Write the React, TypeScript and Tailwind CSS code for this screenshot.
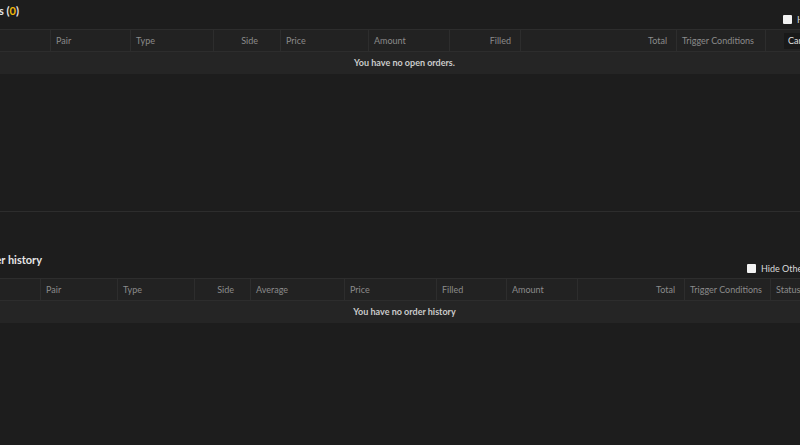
import React from 'react'

type Col = { label: string; w: number; right?: boolean; pr?: number }

const openCols: Col[] = [
  { label: 'Date', w: 50 },
  { label: 'Pair', w: 80 },
  { label: 'Type', w: 83 },
  { label: 'Side', w: 67, right: true, pr: 22 },
  { label: 'Price', w: 88 },
  { label: 'Amount', w: 81 },
  { label: 'Filled', w: 71, right: true, pr: 9 },
  { label: 'Total', w: 156, right: true, pr: 9 },
  { label: 'Trigger Conditions', w: 89 },
]

const historyCols: Col[] = [
  { label: 'Date', w: 40 },
  { label: 'Pair', w: 77 },
  { label: 'Type', w: 77 },
  { label: 'Side', w: 56, right: true, pr: 16 },
  { label: 'Average', w: 94 },
  { label: 'Price', w: 92 },
  { label: 'Filled', w: 70 },
  { label: 'Amount', w: 71 },
  { label: 'Total', w: 107, right: true, pr: 9 },
  { label: 'Trigger Conditions', w: 86 },
  { label: 'Status', w: 90 },
]

function HeaderRow({ cols, extra }: { cols: Col[]; extra?: React.ReactNode }) {
  return (
    <div className="flex h-[23px] border-y border-[#2d2d2d] bg-[#222222]">
      {cols.map((c, i) => (
        <div
          key={i}
          className={`flex items-center shrink-0 h-full text-[9px] text-[#8b8b8b] ${i > 0 ? 'border-l border-[#2d2d2d] pl-[5px]' : 'justify-end overflow-hidden'} ${c.right ? 'justify-end' : ''}`}
          style={{ width: c.w, paddingRight: c.pr }}
        >
          {i === 0 ? <span className="invisible">{c.label}</span> : c.label}
        </div>
      ))}
      {extra}
    </div>
  )
}

function Checkbox({ label }: { label: string }) {
  return (
    <label className="flex items-center gap-[5px] text-[9px] text-[#dadada] whitespace-nowrap">
      <span className="w-[9px] h-[9px] bg-[#f2f2f2] rounded-[1px] shrink-0" />
      {label}
    </label>
  )
}

function Title({ children, w }: { children: React.ReactNode; w: number }) {
  // the panel is scrolled sideways, so the title's start is off-screen
  return (
    <div className="flex justify-end shrink-0" style={{ width: w }}>
      <h2 className="shrink-0 text-[11px] font-bold text-[#e6e6e6] whitespace-nowrap">{children}</h2>
    </div>
  )
}

function EmptyRow({ text }: { text: string }) {
  return (
    <div className="h-[22px] flex items-center justify-center pl-[9px] bg-[#252525] text-[9px] font-bold text-[#cbcbcb]">
      {text}
    </div>
  )
}

function OpenOrders() {
  return (
    <section className="h-[250px] border-b border-[#2d2d2d] pt-[38px]">
      <div className="flex h-[29px]">
        <div className="mt-[3px]">
          <Title w={19}>
            Open orders (<span className="text-[#f0b90b]">0</span>)
          </Title>
        </div>
        <div className="ml-auto mt-[13px] w-[17px] shrink-0">
          <Checkbox label="Hide Other Pairs" />
        </div>
      </div>
      <HeaderRow
        cols={openCols}
        extra={
          <div className="flex items-center border-l border-[#2d2d2d] pl-[18px] shrink-0">
            <button className="h-[16px] px-[4px] bg-[#191919] text-[9px] text-[#e0e0e0] whitespace-nowrap">
              Cancel All
            </button>
          </div>
        }
      />
      <EmptyRow text="You have no open orders." />
    </section>
  )
}

function OrderHistory() {
  return (
    <section className="pt-[37px]">
      <div className="flex h-[29px]">
        <div className="mt-[3px]">
          <Title w={42}>Order history</Title>
        </div>
        <div className="ml-auto mt-[13px] w-[53px] shrink-0">
          <Checkbox label="Hide Other Pairs" />
        </div>
      </div>
      <HeaderRow cols={historyCols} />
      <EmptyRow text="You have no order history" />
    </section>
  )
}

export default function App() {
  return (
    <div className="w-[800px] h-[445px] overflow-hidden bg-[#1d1d1d] font-['Lato',sans-serif]">
      <div className="mt-[-38px]">
        <OpenOrders />
        <OrderHistory />
      </div>
    </div>
  )
}
